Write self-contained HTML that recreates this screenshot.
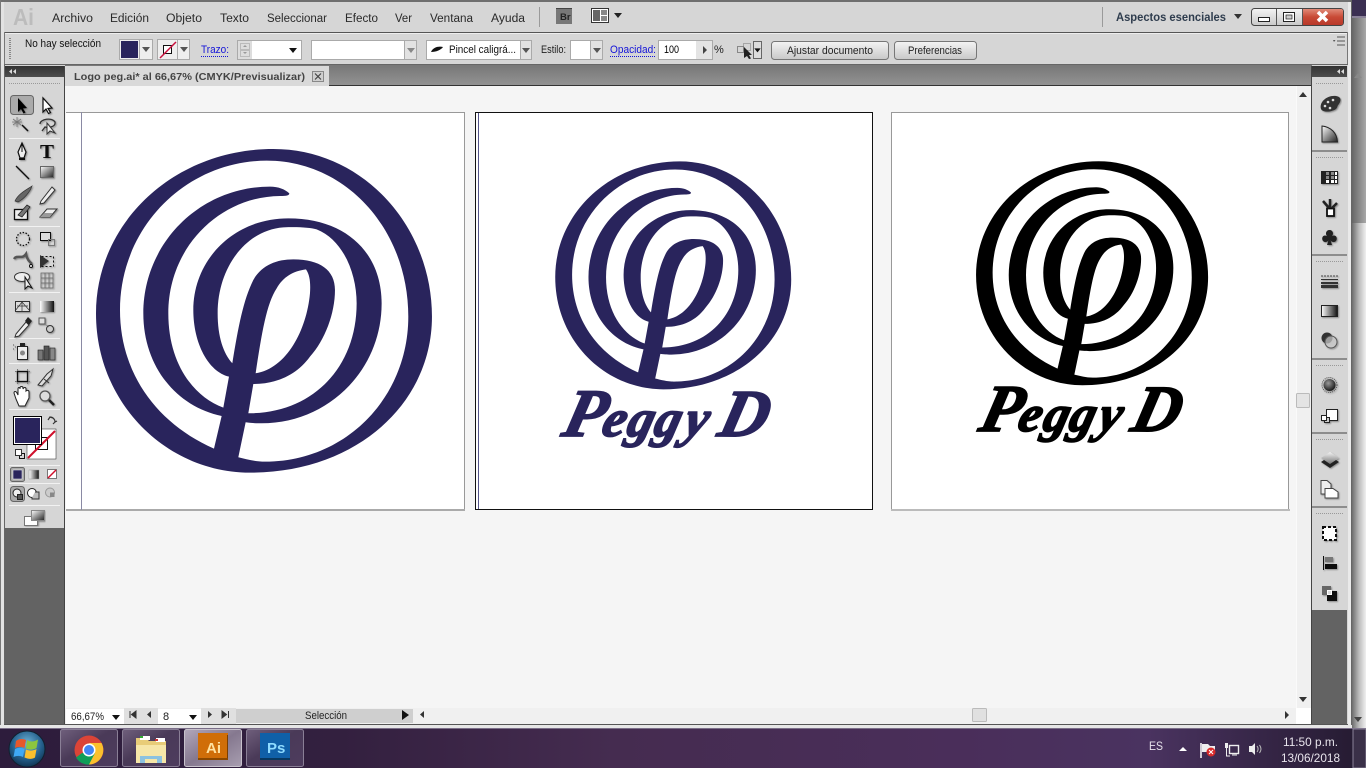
<!DOCTYPE html>
<html lang="es"><head><meta charset="utf-8"><title>Adobe Illustrator</title>
<style>
html,body{margin:0;padding:0;width:1366px;height:768px;overflow:hidden;background:#e4e4e4}
svg{position:absolute;left:0;top:0;display:block}
text{font-family:"Liberation Sans",sans-serif;font-size:11px;fill:#222}
.m{font-size:11.5px;fill:#2a2a2a}
.b{fill:#1414d8}
.tb{font-size:12px;fill:#e8e4ec}
.sc{font-family:"Liberation Serif",serif;font-weight:bold;font-style:italic}
</style></head><body>
<svg width="1366" height="768" viewBox="0 0 1366 768" xmlns="http://www.w3.org/2000/svg">
<defs>
<filter id="sh" x="-5%" y="-5%" width="110%" height="110%"><feDropShadow dx="1" dy="1" stdDeviation=".8" flood-color="#000" flood-opacity=".35"/></filter>
<linearGradient id="tabs" x1="0" y1="0" x2="0" y2="1"><stop offset="0" stop-color="#777"/><stop offset="1" stop-color="#929292"/></linearGradient>
<linearGradient id="hdr" x1="0" y1="0" x2="0" y2="1"><stop offset="0" stop-color="#333"/><stop offset="1" stop-color="#4d4d4d"/></linearGradient>
<linearGradient id="btn" x1="0" y1="0" x2="0" y2="1"><stop offset="0" stop-color="#f4f4f4"/><stop offset="1" stop-color="#c8c8c8"/></linearGradient>
<linearGradient id="side1" x1="0" y1="0" x2="1" y2="0"><stop offset="0" stop-color="#666"/><stop offset="1" stop-color="#a8a8a8"/></linearGradient>
<linearGradient id="side2" x1="0" y1="0" x2="1" y2="0"><stop offset="0" stop-color="#6d6d6d"/><stop offset=".5" stop-color="#bcbcbc"/><stop offset="1" stop-color="#f0f0f0"/></linearGradient>
<linearGradient id="task" x1="0" y1="0" x2="1" y2="0"><stop offset="0" stop-color="#2d1c3c"/><stop offset=".25" stop-color="#33203f"/><stop offset=".45" stop-color="#452c50"/><stop offset=".7" stop-color="#4a2e5a"/><stop offset=".84" stop-color="#4a3360"/><stop offset="1" stop-color="#241a30"/></linearGradient>
<linearGradient id="tbtn" x1="0" y1="0" x2="1" y2="1"><stop offset="0" stop-color="#6f5f7c"/><stop offset=".45" stop-color="#4a3a58"/><stop offset="1" stop-color="#4e3c5e"/></linearGradient>
<linearGradient id="tact" x1="0" y1="0" x2="1" y2="1"><stop offset="0" stop-color="#b3a8bb"/><stop offset=".5" stop-color="#85788f"/><stop offset="1" stop-color="#a89eb0"/></linearGradient>
<linearGradient id="gr" x1="0" y1="0" x2="1" y2="1"><stop offset="0" stop-color="#fff"/><stop offset="1" stop-color="#222"/></linearGradient>
<linearGradient id="grh" x1="0" y1="0" x2="1" y2="0"><stop offset="0" stop-color="#fff"/><stop offset="1" stop-color="#111"/></linearGradient>
<linearGradient id="lay" x1="0" y1="0" x2="0" y2="1"><stop offset="0" stop-color="#f4f4f4"/><stop offset="1" stop-color="#777"/></linearGradient>
<linearGradient id="close" x1="0" y1="0" x2="0" y2="1"><stop offset="0" stop-color="#e08a78"/><stop offset=".5" stop-color="#c84a36"/><stop offset="1" stop-color="#b8382a"/></linearGradient>
<radialGradient id="orb" cx=".5" cy=".35" r=".7"><stop offset="0" stop-color="#6fb4d8"/><stop offset=".6" stop-color="#235e8a"/><stop offset="1" stop-color="#0d2c48"/></radialGradient>
<radialGradient id="ball" cx=".4" cy=".35" r=".7"><stop offset="0" stop-color="#999"/><stop offset="1" stop-color="#111"/></radialGradient>
<path id="logo" fill-rule="evenodd" d="M48 520C48 250 280 27 580 27C850 27 1056 260 1056 530C1056 790 830 998 510 998C260 998 48 790 48 520Z
M402 926C230 850 120 700 120 510C120 260 320 62 560 62C800 62 985 270 985 530C985 770 800 965 555 965C525 965 500 958 475 952L497 847C520 850 530 850 545 850C745 850 905 690 905 490C905 340 800 235 625 235C460 235 340 360 340 510C340 610 385 695 447 710L430 803C340 770 265 670 265 520C265 320 420 170 600 168C620 168 628 166 628 160C615 148 595 140 570 140C360 140 190 310 190 520C190 680 290 800 425 828Z
M457 670C475 560 490 480 520 420C545 375 590 358 640 358C720 358 765 390 765 450C765 520 735 600 690 650C650 705 590 732 520 732L505 820C700 820 830 680 830 490C830 400 790 300 710 268C690 262 650 260 610 262C500 270 413 380 413 520C413 590 430 640 457 670Z
M527 700C545 580 560 490 590 445C610 410 640 393 678 388C690 405 692 430 690 460C680 570 620 685 527 700Z"/>
<path id="tri" d="M-4 -2H4L0 3Z"/>
</defs>

<!-- window base -->
<rect width="1352" height="728" fill="#d6d6d6"/>
<rect x="0" y="0" width="1352" height="2" fill="#6f6f6f"/>
<rect x="0" y="0" width="1" height="728" fill="#777"/>
<rect x="1" y="2" width="3" height="726" fill="#e2e2e2"/>
<rect x="1348" y="2" width="3" height="726" fill="#eaeaea"/>
<rect x="1351" y="0" width="1" height="728" fill="#666"/>
<!-- right of window -->
<rect x="1352" y="0" width="14" height="18" fill="#3b2f52"/>
<rect x="1352" y="16" width="14" height="2" fill="#8a8298"/>
<rect x="1352" y="18" width="14" height="205" fill="url(#side1)"/>
<rect x="1352" y="223" width="14" height="505" fill="url(#side2)"/>
<path d="M1354 78H1362L1358 73Z" fill="#888"/>
<g transform="translate(1358 719)" fill="#444"><use href="#tri"/></g>

<!-- menu -->
<text x="13" y="25" style="font-size:23px;font-weight:bold;fill:#bcbcbc" textLength="21" lengthAdjust="spacingAndGlyphs">Ai</text>
<g class="menu">
<text class="m" x="52" y="22" textLength="41" lengthAdjust="spacingAndGlyphs">Archivo</text>
<text class="m" x="110" y="22" textLength="39" lengthAdjust="spacingAndGlyphs">Edición</text>
<text class="m" x="166" y="22" textLength="36" lengthAdjust="spacingAndGlyphs">Objeto</text>
<text class="m" x="220" y="22" textLength="29" lengthAdjust="spacingAndGlyphs">Texto</text>
<text class="m" x="267" y="22" textLength="60" lengthAdjust="spacingAndGlyphs">Seleccionar</text>
<text class="m" x="345" y="22" textLength="33" lengthAdjust="spacingAndGlyphs">Efecto</text>
<text class="m" x="395" y="22" textLength="17" lengthAdjust="spacingAndGlyphs">Ver</text>
<text class="m" x="430" y="22" textLength="43" lengthAdjust="spacingAndGlyphs">Ventana</text>
<text class="m" x="491" y="22" textLength="34" lengthAdjust="spacingAndGlyphs">Ayuda</text>
</g>
<rect x="539" y="7" width="1" height="20" fill="#9a9a9a"/>
<rect x="1102" y="7" width="1" height="20" fill="#9a9a9a"/>
<rect x="556" y="8" width="16" height="16" fill="#777"/><rect x="556" y="8" width="16" height="1" fill="#444"/>
<text x="560" y="20" style="font-size:9.5px;font-weight:bold;fill:#222">Br</text>
<rect x="591.500" y="8.500" width="17" height="14" fill="#fff" stroke="#333"/>
<rect x="593" y="10" width="7" height="11" fill="#666"/><rect x="601" y="10" width="6" height="5" fill="#888"/><rect x="601" y="16" width="6" height="5" fill="#888"/>
<use href="#tri" transform="translate(618 15)" fill="#222"/>
<text x="1116" y="21" style="font-size:12px;font-weight:bold;fill:#2f3d4e" textLength="110" lengthAdjust="spacingAndGlyphs">Aspectos esenciales</text>
<use href="#tri" transform="translate(1238 16)" fill="#333"/>
<!-- window buttons -->
<rect x="1251.500" y="8.500" width="92" height="17" rx="3" fill="url(#btn)" stroke="#444"/>
<path d="M1302 9H1341a2 2 0 0 1 2 2V23a2 2 0 0 1-2 2H1302Z" fill="url(#close)"/>
<rect x="1276" y="9" width="1" height="16" fill="#555"/><rect x="1302" y="9" width="1" height="16" fill="#555"/>
<rect x="1258.500" y="17.500" width="11" height="4" fill="#fff" stroke="#222"/>
<rect x="1283.500" y="12.500" width="11" height="9" fill="#fff" stroke="#222"/><rect x="1286" y="15" width="6" height="4" fill="#ccc" stroke="#222" stroke-width=".7"/>
<path d="M1318 12L1327 21M1327 12L1318 21" stroke="#fff" stroke-width="3.500"/>

<!-- control bar -->
<rect x="4" y="32" width="1344" height="1" fill="#555"/>
<rect x="4" y="33" width="1344" height="1" fill="#eee"/>
<rect x="4" y="32" width="1" height="33" fill="#777"/>
<rect x="1347" y="32" width="1" height="33" fill="#777"/>
<rect x="4" y="64" width="1344" height="1" fill="#666"/>
<path d="M10 38V60" stroke="#888" stroke-width="2" stroke-dasharray="1 1"/>
<text x="25" y="47" textLength="76" lengthAdjust="spacingAndGlyphs" style="fill:#111">No hay selección</text>
<!-- fill -->
<rect x="119.500" y="39.500" width="33" height="20" fill="#eee" stroke="#aaa"/><rect x="121" y="41" width="17" height="17" fill="#29245c"/><rect x="139" y="40" width="1" height="19" fill="#aaa"/>
<use href="#tri" transform="translate(146 49)" fill="#555"/>
<!-- stroke -->
<rect x="157.500" y="39.500" width="32" height="20" fill="#eee" stroke="#aaa"/><rect x="177" y="40" width="1" height="19" fill="#aaa"/>
<rect x="163.500" y="45.500" width="8" height="8" fill="#fff" stroke="#111"/>
<path d="M160 58L176 42" stroke="#c8103c" stroke-width="1.500"/>
<use href="#tri" transform="translate(184 49)" fill="#555"/>
<text class="b" x="201" y="53" textLength="28" lengthAdjust="spacingAndGlyphs" style="fill:#1414d8">Trazo:</text>
<path d="M201 56.500H229" stroke="#1414d8" stroke-dasharray="1 1"/>
<!-- stroke field -->
<rect x="237.500" y="40.500" width="64" height="19" fill="#fff" stroke="#aaa"/><rect x="238" y="41" width="14" height="18" fill="#ddd"/>
<rect x="240.500" y="43.500" width="9" height="6" fill="none" stroke="#bbb"/><rect x="240.500" y="50.500" width="9" height="6" fill="none" stroke="#bbb"/>
<path d="M243 47H247L245 45ZM243 52H247L245 54Z" fill="#999"/>
<use href="#tri" transform="translate(293 50)" fill="#111"/>
<!-- blank -->
<rect x="311.500" y="40.500" width="105" height="19" fill="#fff" stroke="#aaa"/><rect x="405" y="41" width="11" height="18" fill="#e2e2e2"/><rect x="404" y="41" width="1" height="18" fill="#aaa"/>
<use href="#tri" transform="translate(411 50)" fill="#888"/>
<!-- brush -->
<rect x="426.500" y="40.500" width="105" height="19" fill="#fff" stroke="#aaa"/><rect x="521" y="41" width="10" height="18" fill="#e2e2e2"/><rect x="520" y="41" width="1" height="18" fill="#aaa"/>
<path d="M431 52C433 47 439 46 443 47C441 50 436 52 431 52Z" fill="#111"/>
<text x="449" y="53" textLength="67" lengthAdjust="spacingAndGlyphs" style="fill:#111">Pincel caligrá...</text>
<use href="#tri" transform="translate(526 50)" fill="#555"/>
<!-- estilo -->
<text x="541" y="53" textLength="25" lengthAdjust="spacingAndGlyphs">Estilo:</text>
<rect x="570.500" y="40.500" width="32" height="19" fill="#fff" stroke="#aaa"/><rect x="591" y="41" width="11" height="18" fill="#e2e2e2"/><rect x="590" y="41" width="1" height="18" fill="#aaa"/>
<use href="#tri" transform="translate(597 50)" fill="#555"/>
<text x="610" y="53" textLength="46" lengthAdjust="spacingAndGlyphs" style="fill:#1414d8">Opacidad:</text>
<path d="M610 56.500H655" stroke="#1414d8" stroke-dasharray="1 1"/>
<rect x="658.500" y="40.500" width="54" height="19" fill="#fff" stroke="#aaa"/><rect x="696" y="41" width="16" height="18" fill="#e4e4e4"/>
<text x="664" y="53" textLength="15" lengthAdjust="spacingAndGlyphs" style="fill:#000">100</text>
<path d="M703 46L707 50L703 54Z" fill="#444"/>
<text x="714" y="53" textLength="10">%</text>
<!-- align icon -->
<rect x="737.500" y="46.500" width="6" height="6" fill="none" stroke="#888"/><rect x="743.500" y="43.500" width="7" height="7" fill="none" stroke="#777" stroke-dasharray="1 1"/>
<path d="M744 47L752 55H749L751 58.500L749 59L747 56L744 58Z" fill="#222"/>
<rect x="753.500" y="41.500" width="8" height="17" fill="#ddd" stroke="#666"/>
<use href="#tri" transform="translate(757.500 50) scale(.8)" fill="#111"/>
<rect x="771.500" y="41.500" width="117" height="18" rx="3" fill="url(#btn)" stroke="#777"/>
<text x="787" y="54" textLength="86" lengthAdjust="spacingAndGlyphs">Ajustar documento</text>
<rect x="894.500" y="41.500" width="82" height="18" rx="3" fill="url(#btn)" stroke="#777"/>
<text x="908" y="54" textLength="54" lengthAdjust="spacingAndGlyphs">Preferencias</text>
<path d="M1337 37H1345M1337 41H1345M1337 45H1345" stroke="#555" stroke-width="1"/>
<path d="M1333 40H1335.500L1334 42Z" fill="#555"/>

<!-- tab strip -->
<rect x="65" y="65" width="1247" height="20" fill="url(#tabs)"/>
<rect x="65" y="85" width="1247" height="1" fill="#333"/>
<rect x="65" y="66" width="264" height="20" fill="#d9d9d9"/>
<text x="74" y="80" textLength="231" lengthAdjust="spacingAndGlyphs" style="font-weight:bold;fill:#444;font-size:10.500px">Logo peg.ai* al 66,67% (CMYK/Previsualizar)</text>
<rect x="312.500" y="71.500" width="11" height="10" fill="#cfcfcf" stroke="#888"/>
<path d="M315 73.500L321 79.500M321 73.500L315 79.500" stroke="#444" stroke-width="1.200"/>

<!-- canvas -->
<rect x="65" y="86" width="1246" height="622" fill="#f5f5f5"/>
<rect x="66" y="112" width="398" height="398" fill="#fff"/>
<path d="M66 112.500H464.500V510" fill="none" stroke="#999"/>
<rect x="66" y="509" width="399" height="2" fill="#aaa"/>
<rect x="81" y="112" width="1" height="398" fill="#8a8aa4"/>
<rect x="475" y="112" width="398" height="398" fill="#fff"/>
<rect x="475.500" y="112.500" width="397" height="397" fill="none" stroke="#111"/>
<rect x="478" y="113" width="1" height="396" fill="#55558a"/>
<rect x="891" y="112" width="398" height="398" fill="#fff"/>
<rect x="891.500" y="112.500" width="397" height="397" fill="none" stroke="#999"/>
<rect x="891" y="509" width="399" height="2" fill="#bbb"/>

<!-- logos -->
<use href="#logo" fill="#29245c" transform="translate(80 140) scale(.3333)"/>
<use href="#logo" fill="#29245c" transform="translate(544 155) scale(.2341 .2348)"/>
<use href="#logo" fill="#000" transform="translate(965 155) scale(.2302 .2307)"/>
<g transform="translate(0 436) skewX(-14)" style="fill:#29245c;stroke:#29245c;stroke-width:1.800">
<text class="sc" x="560" y="0" style="font-size:68px;fill:inherit">P</text>
<text class="sc" x="600 625 652 682" y="0" style="font-size:52px;fill:inherit">eggy</text>
<text class="sc" x="716" y="0" style="font-size:67px;fill:inherit">D</text>
</g>
<g transform="translate(0 431) skewX(-14)" style="fill:#000;stroke:#000;stroke-width:1.800">
<text class="sc" x="977" y="0" style="font-size:67px;fill:inherit">P</text>
<text class="sc" x="1016 1041 1067 1096" y="0" style="font-size:51px;fill:inherit">eggy</text>
<text class="sc" x="1129" y="0" style="font-size:66px;fill:inherit">D</text>
</g>

<!-- v scrollbar -->
<rect x="1296" y="86" width="15" height="622" fill="#f0f0f0"/>
<rect x="1296" y="86" width="1" height="622" fill="#fafafa"/>
<path d="M1299 97H1307L1303 92Z" fill="#333"/>
<rect x="1296.500" y="393.500" width="13" height="14" rx="1" fill="#e4e4e4" stroke="#bbb"/>
<path d="M1299 697H1307L1303 702Z" fill="#333"/>

<!-- status bar -->
<rect x="65" y="708" width="1246" height="16" fill="#f0f0f0"/>
<rect x="66" y="709" width="58" height="15" fill="#fff"/>
<text x="71" y="720" textLength="33" lengthAdjust="spacingAndGlyphs">66,67%</text>
<use href="#tri" transform="translate(116 717)" fill="#111"/>
<rect x="124" y="708" width="34" height="16" fill="#e0e0e0"/>
<path d="M130 711V718M136 711V718L131.500 714.500Z" stroke="#333" fill="#333"/>
<path d="M151 711V718L147 714.500Z" fill="#333"/>
<rect x="158" y="709" width="43" height="15" fill="#fff"/>
<text x="163" y="720">8</text>
<use href="#tri" transform="translate(193 717)" fill="#111"/>
<rect x="201" y="708" width="35" height="16" fill="#e0e0e0"/>
<path d="M208 711V718L212 714.500Z" fill="#333"/>
<path d="M222 711V718L226.500 714.500ZM228.500 711V718" stroke="#333" fill="#333"/>
<rect x="236" y="709" width="177" height="14" fill="#cfcfcf"/>
<text x="305" y="719" textLength="42" lengthAdjust="spacingAndGlyphs">Selección</text>
<path d="M402 710V720L409 715Z" fill="#111"/>
<rect x="414" y="708" width="882" height="15" fill="#f0f0f0"/>
<path d="M424 711V718L420 714.500Z" fill="#333"/>
<rect x="972.500" y="708.500" width="14" height="13" rx="1" fill="#e0e0e0" stroke="#bbb"/>
<path d="M1285 711V719L1289 715Z" fill="#333"/>
<rect x="1296" y="708" width="15" height="16" fill="#fff"/>

<!-- left toolbar -->
<rect x="5" y="66" width="59" height="11" fill="url(#hdr)"/>
<path d="M12 69V74L9 71.500ZM16 69V74L13 71.500Z" fill="#ddd"/>
<rect x="4" y="65" width="1" height="659" fill="#666"/>
<rect x="64" y="66" width="1" height="658" fill="#444"/>
<rect x="5" y="77" width="59" height="451" fill="#d6d6d6"/>
<rect x="5" y="528" width="59" height="196" fill="#636363"/>
<rect x="1312" y="610" width="35" height="114" fill="#636363"/>
<path d="M9 83.500H60" stroke="#999" stroke-dasharray="1 1"/>
<path d="M9 138.500H60M9 226.500H60M9 292.500H60M9 338.500H60M9 363.500H60M9 409.500H60M9 465.500H60M9 483.500H60M9 505.500H60" stroke="#f2f2f2"/>
<!-- tools -->
<rect x="10.500" y="95.500" width="23" height="19" rx="3" fill="#aaa" stroke="#666"/>
<g filter="url(#sh)">
<path d="M18 98V112L21 109L23.500 113.500L25.500 112.500L23 108.500L27 108Z" fill="#000"/>
<path d="M43 98V112L46 109L48.500 113.500L50.500 112.500L48 108.500L52 108Z" fill="#fff" stroke="#111" stroke-width="1.200"/>
<path d="M22 125L28 131" stroke="#111" stroke-width="1.500"/>
<path d="M13 119L21 125M21 119L13 125M17 117V127M12 122H22" stroke="#777" stroke-width=".8"/>
<path d="M40 124C40 119 52 117 55 122C56 127 48 128 45 127L42 131" fill="none" stroke="#333" stroke-width="1.300"/>
<path d="M47 123L47 134L50 131L55 133Z" fill="#eee" stroke="#333"/>
<path d="M22 143L26 152L24 158H20L18 152Z" fill="#eee" stroke="#111" stroke-width="1.200"/><path d="M22 143V152" stroke="#111"/><rect x="19" y="158" width="6" height="2" fill="#111"/>
<text x="40" y="158" style="font-family:'Liberation Serif',serif;font-weight:bold;font-size:20px;fill:#111" textLength="14" lengthAdjust="spacingAndGlyphs">T</text>
<path d="M16 166L29 179" stroke="#111" stroke-width="1.300"/>
<rect x="40.500" y="166.500" width="13" height="11" fill="url(#gr)" stroke="#666"/>
<path d="M15 201C18 194 26 190 32 186C30 192 24 199 18 202Z" fill="#666" stroke="#333" stroke-width=".7"/>
<path d="M41 201L52 187L55 190L44 203L40 204Z" fill="#eee" stroke="#333"/>
<rect x="14.500" y="209.500" width="13" height="10" fill="#eee" stroke="#111" stroke-width="1.300"/>
<path d="M18 215L27 205L30 207L22 217Z" fill="#777" stroke="#222" stroke-width=".8"/>
<path d="M40 217L47 209H57L50 217Z" fill="#eee" stroke="#333"/><path d="M40 217L44 213H53L50 217Z" fill="#999"/>
<circle cx="23" cy="239" r="6.500" fill="none" stroke="#111" stroke-dasharray="1.500 1.500" stroke-width="1.300"/>
<rect x="40.500" y="232.500" width="10" height="8" fill="#ddd" stroke="#111"/><rect x="48.500" y="239.500" width="6" height="6" fill="none" stroke="#777"/>
<path d="M14 259C17 254 22 260 26 254C27 260 30 262 32 264" fill="none" stroke="#555" stroke-width="2.500"/><circle cx="31" cy="266" r="1.500" fill="#fff" stroke="#111"/>
<rect x="41.500" y="256.500" width="12" height="10" fill="none" stroke="#111" stroke-dasharray="2 2"/><path d="M40 255L49 261L40 268Z" fill="#333"/>
<ellipse cx="22" cy="277" rx="7.500" ry="4.500" fill="#eee" stroke="#333"/><path d="M25 277V289L28 286L32 288Z" fill="#eee" stroke="#111"/>
<path d="M41 273H53V288H41ZM41 278H53M41 283H53M45 273V288M49 273V288" fill="none" stroke="#666" stroke-width=".8"/>
<rect x="15.500" y="301.500" width="14" height="10" fill="#ddd" stroke="#333"/><path d="M15 311L22 302L30 311M22 302V311M17 306H28" fill="none" stroke="#333" stroke-width=".7"/>
<rect x="40" y="301" width="14" height="11" fill="url(#grh)"/>
<path d="M16 334L26 322L29 325L19 336L15 337Z" fill="#eee" stroke="#333"/><path d="M25 321L28 317L32 321L29 325Z" fill="#222"/>
<rect x="39" y="318" width="6" height="6" fill="#ddd" stroke="#555"/><circle cx="50" cy="329" r="3.500" fill="#ccc" stroke="#333"/><path d="M45 324L49 327" stroke="#777" stroke-dasharray="1 1"/>
<rect x="17.500" y="346.500" width="10" height="13" fill="#eee" stroke="#222"/><rect x="20" y="343" width="5" height="3" fill="#222"/><circle cx="22.500" cy="353" r="2.500" fill="#888"/><path d="M13 345h1M15 347h1M13 349h1" stroke="#555"/>
<rect x="38" y="350" width="5" height="10" fill="#777" stroke="#222" stroke-width=".6"/><rect x="44" y="346" width="5" height="14" fill="#555" stroke="#222" stroke-width=".6"/><rect x="50" y="348" width="5" height="12" fill="#888" stroke="#222" stroke-width=".6"/>
<rect x="17.500" y="371.500" width="10" height="10" fill="none" stroke="#111" stroke-width="1.300"/><path d="M15 371.500h2M28 371.500h2M15 381.500h2M28 381.500h2M17.500 369v2M27.500 369v2M17.500 382v2M27.500 382v2" stroke="#777"/>
<path d="M38 385L47 374L53 369L51 376L42 386Z" fill="#ddd" stroke="#333"/><path d="M44 379L49 383" stroke="#333"/>
<path d="M16 399L14 393C14 391 16 391 17 393L18 395V389C18 387 20 387 20 389V388C20 386 23 386 23 388V389C24 387 26 387 26 389V391C27 390 29 390 29 392V398L25 406H19Z" fill="#fff" stroke="#222"/>
<circle cx="45" cy="396" r="5" fill="#ddd" stroke="#555" stroke-width="1.300"/><path d="M49 400L54 405" stroke="#222" stroke-width="2.500"/>
</g>
<!-- fill/stroke -->
<path d="M50 417A5 5 0 0 1 55 422M48 420L50 417L53 418M55 422L53 424M55 422L57 421" fill="none" stroke="#333" stroke-width="1.200"/>
<rect x="27" y="429" width="29" height="30" fill="#fff" stroke="#222" stroke-width=".5"/>
<rect x="35.500" y="437.500" width="12" height="12" fill="#fff" stroke="#111"/>
<path d="M28 458L55 431" stroke="#d0102c" stroke-width="2"/>
<rect x="13" y="416" width="29" height="29" fill="#000"/><rect x="14" y="417" width="27" height="27" fill="#fff"/><rect x="15" y="418" width="25" height="25" fill="#29245c"/>
<rect x="19.500" y="453.500" width="5" height="5" fill="none" stroke="#111"/><rect x="15.500" y="449.500" width="6" height="6" fill="#fff" stroke="#333"/>
<rect x="10.500" y="467.500" width="14" height="14" rx="2" fill="#aaa" stroke="#666"/><rect x="13" y="470" width="9" height="9" fill="#29245c" stroke="#fff" stroke-width=".5"/>
<rect x="29" y="470" width="10" height="9" fill="url(#grh)" stroke="#999" stroke-width=".5"/>
<rect x="47.500" y="469.500" width="9" height="9" fill="#fff" stroke="#777"/><path d="M48 478L56 470" stroke="#d0102c" stroke-width="1.500"/>
<rect x="10.500" y="486.500" width="14" height="15" rx="3" fill="#aaa" stroke="#666"/>
<circle cx="17" cy="493" r="4" fill="#eee" stroke="#222"/><rect x="17.500" y="494.500" width="5" height="5" fill="#555" stroke="#222"/>
<circle cx="32" cy="493" r="4.500" fill="#fff" stroke="#222"/><path d="M35 492H39V499H32V497.500" fill="#bbb" stroke="#333"/>
<circle cx="50" cy="492.500" r="4.500" fill="#ccc" stroke="#999"/><path d="M50 492.500H54.500V497H50Z" fill="#888"/>
<g filter="url(#sh)"><rect x="24.500" y="516.500" width="13" height="9" fill="#fff" stroke="#777"/><rect x="31.500" y="510.500" width="13" height="10" fill="url(#gr)" stroke="#888"/></g>

<!-- right panel -->
<rect x="1311" y="66" width="1" height="658" fill="#444"/>
<rect x="1312" y="66" width="35" height="11" fill="url(#hdr)"/>
<path d="M1340 69V74L1337 71.500ZM1344 69V74L1341 71.500Z" fill="#ddd"/>
<path d="M1316 83.500H1343M1316 157.500H1343M1316 261.500H1343M1316 365.500H1343M1316 439.500H1343M1316 513.500H1343" stroke="#999" stroke-dasharray="1 1"/>
<path d="M1312 151H1347M1312 255H1347M1312 359H1347M1312 433H1347M1312 507H1347" stroke="#444" stroke-width="1"/>
<g filter="url(#sh)">
<!-- palette -->
<path d="M1321 109C1319 102 1327 95 1336 96C1342 97 1341 101 1339 104C1337 106 1338 107 1336 109C1332 112 1323 113 1321 109Z" fill="#333"/>
<circle cx="1333" cy="100" r="1.300" fill="#ddd"/><circle cx="1328" cy="102" r="1.300" fill="#ddd"/><circle cx="1325" cy="106" r="1.300" fill="#ddd"/><circle cx="1330" cy="108" r="1.300" fill="#ddd"/>
<!-- gradient slice -->
<path d="M1322 126C1331 127 1337 133 1337.500 142H1322Z" fill="url(#gr)" stroke="#222"/>
<!-- swatches -->
<rect x="1321" y="171" width="17" height="13" fill="#222"/><g fill="#888"><rect x="1326" y="172" width="3" height="3"/><rect x="1331" y="176" width="3" height="3"/><rect x="1326" y="176" width="3" height="3"/><rect x="1331" y="172" width="3" height="3"/></g><g fill="#fff"><rect x="1335" y="172" width="2" height="3"/><rect x="1335" y="176" width="2" height="3"/><rect x="1331" y="180" width="3" height="3"/><rect x="1335" y="180" width="2" height="3"/><rect x="1326" y="180" width="3" height="3"/></g>
<!-- brushes -->
<rect x="1327" y="208.500" width="7" height="7.500" fill="#fff" stroke="#111" stroke-width="1.800"/><path d="M1329 208L1323 201M1330 208V199M1332 208L1337 203" stroke="#222" stroke-width="2.500"/>
<!-- club -->
<path d="M1329.500 230C1333 230 1334 234 1332 236C1336 234 1338 238 1336 241C1334 243 1331 242 1330.500 240L1332 245H1327L1328.500 240C1328 242 1325 243 1323 241C1321 238 1323 234 1327 236C1325 234 1326 230 1329.500 230Z" fill="#222"/>
<!-- stroke -->
<path d="M1321 276H1338" stroke="#444" stroke-dasharray="2 1"/><path d="M1321 279.500H1338" stroke="#333"/><rect x="1321" y="282" width="17" height="2" fill="#333"/><rect x="1321" y="285" width="17" height="3" fill="#333"/>
<!-- gradient -->
<rect x="1321.500" y="305.500" width="16" height="11" fill="url(#grh)" stroke="#222"/>
<!-- transparency -->
<circle cx="1327" cy="338" r="5.500" fill="#333"/><circle cx="1331" cy="342" r="6" fill="#ccc" fill-opacity=".7" stroke="#555"/>
<!-- appearance -->
<circle cx="1329.500" cy="385" r="7.500" fill="none" stroke="#555" stroke-dasharray="1 1"/><circle cx="1329.500" cy="385" r="6" fill="url(#ball)"/>
<!-- graphic styles -->
<rect x="1326.500" y="409.500" width="11" height="11" fill="#fff" stroke="#222"/><rect x="1324.500" y="417.500" width="5" height="5" fill="#ccc" stroke="#222"/><rect x="1321.500" y="415.500" width="5" height="5" fill="#fff" stroke="#222"/>
<!-- layers -->
<path d="M1321 462L1330 456L1339 462L1330 468Z" fill="#222"/><path d="M1321 458L1330 452L1339 458L1330 464Z" fill="url(#lay)"/>
<!-- pages/artboards -->
<path d="M1321 480.500H1327L1331 484V494H1321Z" fill="#eee" stroke="#444"/><path d="M1325 488.500H1333L1338 492V498H1325Z" fill="#fff" stroke="#444"/>
<!-- transform -->
<rect x="1323" y="527" width="13" height="13" fill="#fff" stroke="#111" stroke-dasharray="3 2" stroke-width="2"/>
<!-- align -->
<rect x="1323" y="556" width="1" height="14" fill="#111"/><rect x="1325" y="557" width="8" height="5" fill="#777"/><rect x="1325" y="564" width="12" height="5" fill="#111"/>
<!-- pathfinder -->
<rect x="1322" y="586" width="9" height="9" fill="#666"/><rect x="1327" y="591" width="10" height="10" fill="#111"/><rect x="1327.500" y="590.500" width="4" height="4" fill="#ddd" stroke="#fff"/>
</g>

<!-- window bottom -->
<rect x="4" y="724" width="1344" height="1" fill="#555"/>
<rect x="0" y="725" width="1352" height="3" fill="#e6e6e6"/>

<!-- taskbar -->
<rect x="0" y="728" width="1366" height="40" fill="url(#task)"/>
<rect x="0" y="728" width="1366" height="1" fill="#7a6e88"/>
<circle cx="27" cy="749" r="18" fill="url(#orb)" stroke="#10202e"/>
<path d="M16 741C19 738.500 23 738.500 26 740L24.500 748C21.500 746.500 18 746.500 15 748Z" fill="#e8582a"/>
<path d="M27 740C30 742 34 742 38 739.500L36.500 748C33 750 29.500 750 26 748.500Z" fill="#8cc63f"/>
<path d="M15 749C18 747.500 21 747.500 24.500 749L23 757C20 755.500 17 755.500 13.500 757Z" fill="#3fa9f5"/>
<path d="M26 749.500C29 751 33 751 36.500 749L35 757.500C32 759.500 28 759 24.500 757.500Z" fill="#fbc02d"/>
<rect x="60.500" y="729.500" width="57" height="37" rx="2" fill="url(#tbtn)" stroke="#8a7f96"/>
<rect x="122.500" y="729.500" width="57" height="37" rx="2" fill="url(#tbtn)" stroke="#8a7f96"/>
<rect x="184.500" y="729.500" width="57" height="37" rx="2" fill="url(#tact)" stroke="#c8c2cc"/>
<rect x="246.500" y="729.500" width="57" height="37" rx="2" fill="url(#tbtn)" stroke="#8a7f96"/>
<!-- chrome -->
<circle cx="89" cy="750" r="14.500" fill="#db4437"/>
<path d="M76 757.500A14.500 14.500 0 0 0 91 764.400L97 753H82Z" fill="#0f9d58"/>
<path d="M89 764.500A14.500 14.500 0 0 0 101.500 743H89L95 753Z" fill="#fbc02d"/>
<circle cx="89" cy="750" r="6.500" fill="#fff"/><circle cx="89" cy="750" r="5" fill="#4285f4"/>
<!-- folder -->
<path d="M136 738H146L149 741H166V763H136Z" fill="#e8cc78"/>
<rect x="140" y="736" width="10" height="4" fill="#fff"/><rect x="140" y="736" width="3" height="2" fill="#3a3"/><rect x="156" y="738" width="9" height="4" fill="#fff"/><rect x="155" y="739" width="3" height="2" fill="#c33"/>
<rect x="136" y="745" width="30" height="18" fill="#f6e6a8"/>
<path d="M140 763V756H162V763H157V759H145V763Z" fill="#8cc2e0"/>
<!-- Ai -->
<rect x="198" y="733" width="30" height="27" fill="#d06e08"/><rect x="227" y="735" width="1" height="25" fill="#7a3e00"/><rect x="198" y="758" width="30" height="2" fill="#8a4800"/>
<text x="206" y="753" style="font-size:15px;font-weight:bold;fill:#ffe2a0">Ai</text>
<!-- Ps -->
<rect x="260" y="733" width="30" height="27" fill="#1060a8"/><rect x="260" y="758" width="30" height="2" fill="#083860"/>
<text x="267" y="753" style="font-size:15px;font-weight:bold;fill:#8fdcff">Ps</text>
<!-- tray -->
<text class="tb" x="1149" y="750" textLength="14" lengthAdjust="spacingAndGlyphs">ES</text>
<path d="M1179 751H1187L1183 747Z" fill="#fff"/>
<path d="M1201 743V758" stroke="#fff" stroke-width="1.500"/><path d="M1202 744H1208L1210 746H1215V752H1202Z" fill="#eee"/>
<circle cx="1211" cy="752" r="4.500" fill="#d82a2a"/><path d="M1209 750L1213 754M1213 750L1209 754" stroke="#fff"/>
<rect x="1229.500" y="745.500" width="9" height="8" fill="none" stroke="#eee" stroke-width="1.400"/><path d="M1232 755H1237" stroke="#eee"/><rect x="1225" y="743" width="3" height="5" fill="#eee"/><path d="M1226.500 748V756H1230" stroke="#eee" fill="none"/>
<path d="M1249 746H1252L1255 743V755L1252 752H1249Z" fill="#eee"/><path d="M1257 746C1258.500 748 1258.500 750 1257 752M1259.500 745C1261.500 748 1261.500 750 1259.500 753" fill="none" stroke="#bbb"/>
<text class="tb" x="1283" y="746" textLength="55" lengthAdjust="spacingAndGlyphs">11:50 p.m.</text>
<text class="tb" x="1281" y="762" textLength="59" lengthAdjust="spacingAndGlyphs">13/06/2018</text>
<rect x="1353" y="729" width="13" height="39" fill="#3a3048" stroke="#8a8298"/>
</svg>
</body></html>
